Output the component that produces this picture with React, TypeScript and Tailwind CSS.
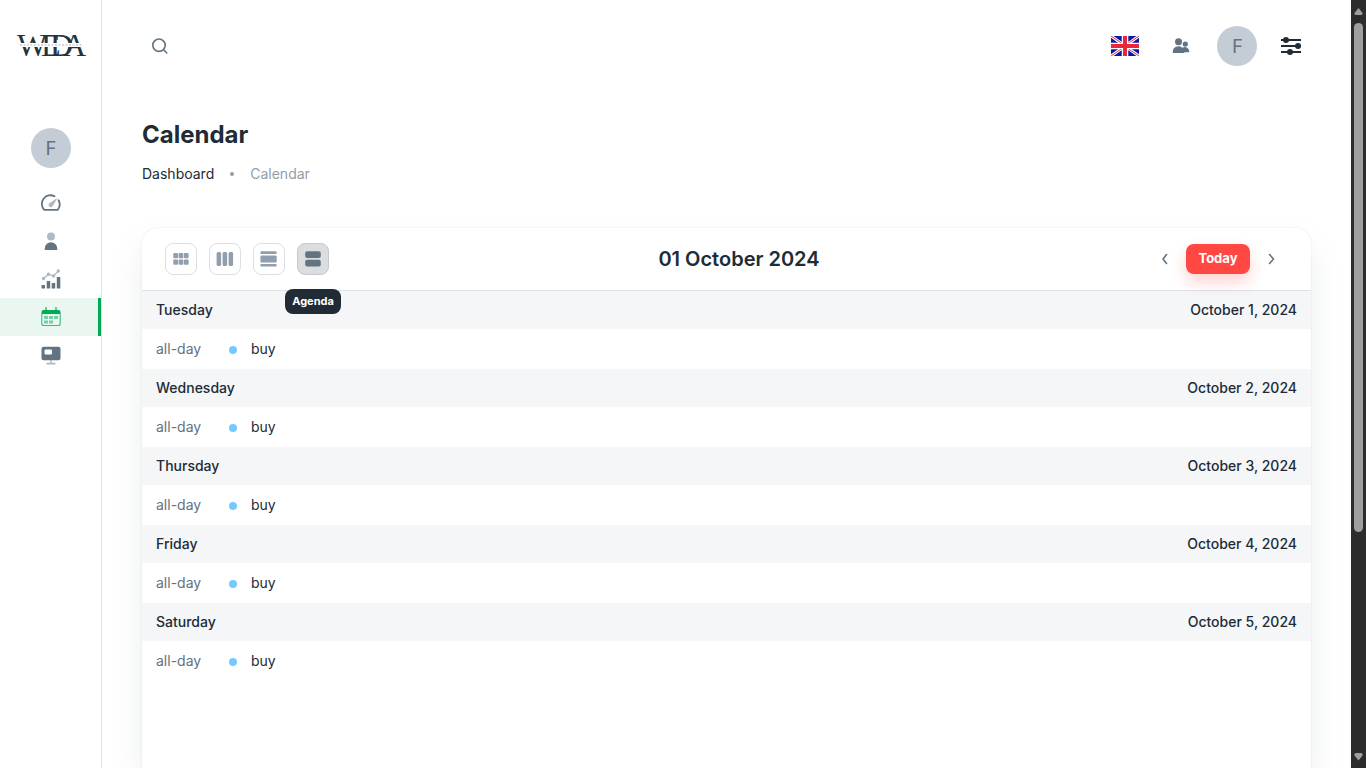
import type { ReactNode } from "react";

const days = [
  { name: "Tuesday", date: "October 1, 2024" },
  { name: "Wednesday", date: "October 2, 2024" },
  { name: "Thursday", date: "October 3, 2024" },
  { name: "Friday", date: "October 4, 2024" },
  { name: "Saturday", date: "October 5, 2024" },
];

function Logo() {
  return (
    <svg width="70" height="28" viewBox="0 0 70 28" role="img" aria-label="WEDA" fill="#22333b" overflow="visible">
      <text x="1 25 34 47" y="25" fontFamily="Liberation Serif, serif" fontSize="32">
        WEDA
      </text>
      <rect x="0" y="12" width="70" height="4" fill="#fff" />
      <path d="M4 14h62" stroke="#aab3b8" strokeWidth="1" strokeDasharray="2 1.5" />
    </svg>
  );
}

function Avatar() {
  return (
    <span className="flex size-10 items-center justify-center rounded-full bg-[#c4cdd5] font-['Noto_Sans',sans-serif] text-xl text-[#637381]">
      F
    </span>
  );
}

function NavItem({ label, active, children }: { label: string; active?: boolean; children: ReactNode }) {
  return (
    <a
      href="#"
      aria-label={label}
      className={
        active
          ? "flex h-[38px] items-center justify-center border-r-[3px] border-[#00ab55] bg-[#e9f7f0] pl-[3px] text-[#00ab55]"
          : "flex h-[38px] items-center justify-center text-[#637381]"
      }
    >
      <svg width="22" height="22" viewBox="0 0 22 22" fill="currentColor">
        {children}
      </svg>
    </a>
  );
}

function Sidebar() {
  return (
    <aside className="flex w-[102px] shrink-0 flex-col border-r border-[#e3e6e9]">
      <a href="#" className="mt-[31px] flex justify-center">
        <Logo />
      </a>
      <a href="#" aria-label="Profile" className="mt-[69px] mb-4 flex justify-center">
        <Avatar />
      </a>
      <nav>
        <NavItem label="Dashboard">
          <path
            d="M14.500 4.300A8.600 8.600 0 0 0 4.300 17.900h13.400A8.700 8.700 0 0 0 18.600 8.300"
            fill="none"
            stroke="currentColor"
            strokeWidth="1.800"
            strokeLinecap="round"
            strokeLinejoin="round"
          />
          <path d="M17.600 5.800 13 13.700A2.300 2.300 0 1 1 9.300 11.200z" opacity=".5" />
        </NavItem>
        <NavItem label="User">
          <circle cx="11" cy="6.500" r="4" opacity=".5" />
          <path d="M4.800 20v-1.500a6.200 6.300 0 0 1 12.400 0V20z" />
        </NavItem>
        <NavItem label="Analytics">
          <rect x="1.500" y="17" width="3.500" height="3.500" rx=".5" />
          <rect x="6.700" y="13" width="3.500" height="7.500" rx=".5" />
          <rect x="11.700" y="15" width="3.500" height="5.500" rx=".5" />
          <rect x="16.800" y="9" width="3.500" height="11.500" rx=".5" />
          <g opacity=".5">
            <path d="m3.500 10.500 5-4 5 1.500 5-5" fill="none" stroke="currentColor" strokeWidth="1.200" />
            <circle cx="3.500" cy="10.500" r="1.700" />
            <circle cx="8.500" cy="6.300" r="1.700" />
            <circle cx="13.500" cy="8" r="1.700" />
            <circle cx="18.300" cy="3" r="1.700" />
          </g>
        </NavItem>
        <NavItem label="Calendar" active>
          <path d="M1.500 8V6a2 2 0 0 1 2-2h15a2 2 0 0 1 2 2v2z" />
          <path d="M6 1.500V5M16 1.500V5" stroke="currentColor" strokeWidth="1.200" strokeLinecap="round" />
          <path
            d="M1.800 8v9.500a2 2 0 0 0 2 2h14.400a2 2 0 0 0 2-2V8"
            fill="none"
            stroke="currentColor"
            strokeWidth="1.100"
            opacity=".75"
          />
          <path d="M4 10h4v3H4zM9 10h4v3H9zM14 10h4v3h-4zM4 14.500h4v3H4zM9 14.500h4v3H9z" opacity=".5" />
        </NavItem>
        <NavItem label="Kanban">
          <path
            fillRule="evenodd"
            d="M3.500 2.800h15a2 2 0 0 1 2 2v9.400a2 2 0 0 1-2 2h-15a2 2 0 0 1-2-2V4.800a2 2 0 0 1 2-2zM5.500 5.500a1 1 0 0 0-1 1v3a1 1 0 0 0 1 1h5.500a1 1 0 0 0 1-1v-3a1 1 0 0 0-1-1z"
          />
          <path d="M10.300 16.200h1.400v2.600h3.800v1.600h-9v-1.600h3.800z" opacity=".5" />
        </NavItem>
      </nav>
    </aside>
  );
}

function Flag() {
  return (
    <svg width="28" height="20" viewBox="0 0 28 20">
      <clipPath id="flag">
        <rect width="28" height="20" rx="1" />
      </clipPath>
      <g clipPath="url(#flag)">
        <path fill="#0a17a7" d="M0 0h28v20H0z" />
        <path d="m0 0 28 20M28 0 0 20" stroke="#fff" strokeWidth="3" />
        <path d="M0 0l11 7.500M28 0 17 7.500M0 20l11-7.500M28 20l-11-7.500" stroke="#e6273e" strokeWidth="1" />
        <path d="M14 0v20M0 10h28" stroke="#fff" strokeWidth="6.600" />
        <path d="M14 0v20M0 10h28" stroke="#e6273e" strokeWidth="4" />
      </g>
    </svg>
  );
}

function Header() {
  return (
    <header className="flex h-[92px] items-center justify-between pr-2.5">
      <button aria-label="Search" className="flex size-9 items-center justify-center">
        <svg width="20" height="20" viewBox="0 0 20 20" fill="none" stroke="#637381" strokeWidth="1.600" strokeLinecap="round">
          <circle cx="9" cy="9.200" r="6.200" />
          <path d="m13.600 13.800 3.200 3.200" />
        </svg>
      </button>
      <div className="flex items-center">
        <button aria-label="Language" className="mr-8">
          <Flag />
        </button>
        <button aria-label="Contacts" className="mr-[26px]">
          <svg width="20" height="20" viewBox="0 0 20 20" fill="#637381">
            <circle cx="7.500" cy="5.700" r="3.500" />
            <circle cx="14.300" cy="8" r="2.600" />
            <path d="M1.800 17v-1.500a5.700 5.200 0 0 1 9.500-3.800 4.600 4.600 0 0 1 7 4.500H13.200V17z" />
          </svg>
        </button>
        <button aria-label="Account" className="mr-6">
          <Avatar />
        </button>
        <button aria-label="Settings">
          <svg width="20" height="20" viewBox="0 0 20 20" fill="#212b36">
            <path d="M0 4h20M0 10h20M0 16h20" stroke="#212b36" strokeWidth="2" />
            <circle cx="5" cy="4" r="3" />
            <circle cx="17" cy="10" r="3" />
            <circle cx="9" cy="16" r="3" />
          </svg>
        </button>
      </div>
    </header>
  );
}

function ViewButton({ label, active, children }: { label: string; active?: boolean; children: ReactNode }) {
  return (
    <button
      aria-label={label}
      className={
        active
          ? "flex size-8 items-center justify-center rounded-lg border border-[#c4cad0] bg-[#dcdddf] text-[#637381]"
          : "flex size-8 items-center justify-center rounded-lg border border-[#dce0e4] text-[#919eab]"
      }
    >
      <svg width="20" height="20" viewBox="0 0 20 20" fill="currentColor">
        {children}
      </svg>
    </button>
  );
}

function Toolbar() {
  return (
    <div className="flex h-[63px] items-center justify-between border-b border-[#dfe3e8] pr-6 pl-[23px]">
      <div className="flex gap-3">
        <ViewButton label="Month">
          <rect x="2.300" y="4" width="4.700" height="5.300" rx="1" />
          <rect x="7.600" y="4" width="4.700" height="5.300" rx="1" />
          <rect x="12.900" y="4" width="4.700" height="5.300" rx="1" />
          <rect x="2.300" y="10.500" width="4.700" height="5.300" rx="1" />
          <rect x="7.600" y="10.500" width="4.700" height="5.300" rx="1" />
          <rect x="12.900" y="10.500" width="4.700" height="5.300" rx="1" />
        </ViewButton>
        <ViewButton label="Week">
          <rect x="1.600" y="3" width="4.500" height="14" rx="1.500" />
          <rect x="7.600" y="3" width="4.500" height="14" rx="1.500" />
          <rect x="13.600" y="3" width="4.500" height="14" rx="1.500" />
        </ViewButton>
        <ViewButton label="Day">
          <rect x="1.400" y="2.300" width="16.300" height="2.600" rx="1" />
          <rect x="1.400" y="6.600" width="16.300" height="6.800" rx="1" />
          <rect x="1.400" y="15" width="16.300" height="2.600" rx="1" />
        </ViewButton>
        <div className="relative">
          <ViewButton label="Agenda" active>
            <rect x="2.200" y="2.200" width="15.600" height="6.900" rx="2" />
            <rect x="2.200" y="10.700" width="15.600" height="6.900" rx="2" />
          </ViewButton>
          <span
            role="tooltip"
            className="absolute top-[46px] left-1/2 flex h-[25px] w-14 -translate-x-1/2 items-center justify-center rounded-lg bg-[#212b36] text-[11px] font-bold text-white"
          >
            Agenda
          </span>
        </div>
      </div>
      <h2 className="text-xl font-semibold">01 October 2024</h2>
      <div className="flex items-center gap-[5px]">
        <button aria-label="Previous" className="flex size-8 items-center justify-center">
          <svg width="20" height="20" viewBox="0 0 20 20" fill="none" stroke="#637381" strokeWidth="1.600" strokeLinecap="round" strokeLinejoin="round">
            <path d="m11.500 5.500-3.500 4.500 3.500 4.500" />
          </svg>
        </button>
        <button className="h-[30px] w-16 rounded-lg bg-[#ff4842] text-[13px] font-bold text-white shadow-[0_8px_16px_0_rgba(255,72,66,0.24)]">
          Today
        </button>
        <button aria-label="Next" className="flex size-8 items-center justify-center">
          <svg width="20" height="20" viewBox="0 0 20 20" fill="none" stroke="#637381" strokeWidth="1.600" strokeLinecap="round" strokeLinejoin="round">
            <path d="m8.500 5.500 4 4.500-4 4.500" />
          </svg>
        </button>
      </div>
    </div>
  );
}

function Agenda() {
  return (
    <table className="w-full text-sm">
      {days.map((day) => (
        <tbody key={day.name}>
          <tr className="h-[38px] bg-[#f4f6f8]">
            <th colSpan={2} scope="rowgroup" className="pl-3.5 text-left font-medium">
              {day.name}
            </th>
            <th className="pr-3.5 text-right font-medium">{day.date}</th>
          </tr>
          <tr className="h-10">
            <td className="w-[87px] pl-3.5 text-[#637381]">all-day</td>
            <td colSpan={2}>
              <span className="flex items-center gap-3.5">
                <span className="mt-px size-2 rounded-full bg-[#74caff]" />
                buy
              </span>
            </td>
          </tr>
        </tbody>
      ))}
    </table>
  );
}

function Scrollbar() {
  return (
    <div aria-hidden="true" className="flex w-[15px] shrink-0 flex-col items-center bg-[#2c2c2c]">
      <svg width="15" height="23" viewBox="0 0 15 23" fill="#9f9f9f">
        <path d="M7.500 8 11.500 13q.5 2-1.500 2H5q-2 0-1.500-2z" />
      </svg>
      <div className="h-[509px] w-[9px] rounded-full bg-[#9f9f9f]" />
      <svg className="mt-auto" width="15" height="20" viewBox="0 0 15 20" fill="#9f9f9f">
        <path d="M7.500 12.500 11.500 7.500q.5-2.500-1.500-2.500H5q-2 0-1.500 2.500z" />
      </svg>
    </div>
  );
}

export default function App() {
  return (
    <div className="flex h-screen overflow-hidden bg-white font-[Inter,sans-serif] text-[#212b36]">
      <Sidebar />
      <main className="flex min-w-0 grow flex-col px-10">
        <Header />
        <h1 className="mt-[25px] text-2xl leading-9 font-bold">Calendar</h1>
        <nav aria-label="Breadcrumb" className="mt-[11px] flex items-center gap-4 text-sm">
          <a href="#">Dashboard</a>
          <span className="size-1 rounded-full bg-[#919eab]" />
          <span className="text-[#919eab]">Calendar</span>
        </nav>
        <section className="mt-11 grow rounded-t-2xl shadow-[0_0_2px_0_rgba(145,158,171,0.24),0_16px_32px_-4px_rgba(145,158,171,0.24)]">
          <Toolbar />
          <Agenda />
        </section>
      </main>
      <Scrollbar />
    </div>
  );
}
